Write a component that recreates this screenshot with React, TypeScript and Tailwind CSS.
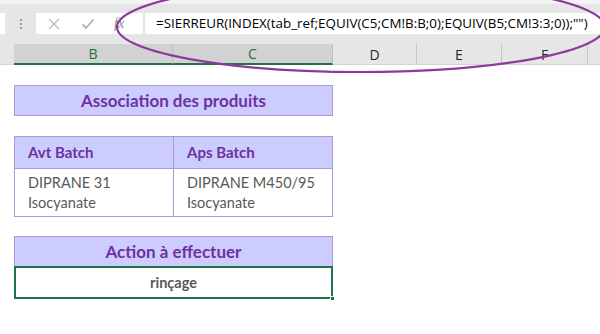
import React from 'react';

const font = { fontFamily: '"Open Sans", "Noto Sans", sans-serif' };

function FormulaBar() {
  return (
    <div className="h-[44px] bg-[#e6e6e6] border-t-[4px] border-[#f3f3f3] pt-[9px]">
      <div className="flex h-[21px] items-stretch">
        <div className="w-[5px] bg-white" />
        <div className="w-[31px] flex flex-col items-center justify-center gap-[2px]">
          <span className="w-[2px] h-[2px] bg-[#9a9a9a]" />
          <span className="w-[2px] h-[2px] bg-[#9a9a9a]" />
          <span className="w-[2px] h-[2px] bg-[#9a9a9a]" />
        </div>
        <div className="w-[107px] bg-white flex items-center text-[#b3b3b3]">
          <svg width="14" height="14" viewBox="0 0 14 14" className="ml-[11px]">
            <path d="M2 2 L12 12 M12 2 L2 12" stroke="#b8b8b8" strokeWidth="1.3" />
          </svg>
          <svg width="14" height="14" viewBox="0 0 14 14" className="ml-[20px]">
            <path d="M1.5 7.5 L5 11 L12.5 2.5" stroke="#b0b0b0" strokeWidth="1.8" fill="none" />
          </svg>
          <span className="ml-[19px] italic text-[14px] text-[#8a8a8a]" style={{ fontFamily: '"Liberation Serif", serif' }}>
            fx
          </span>
        </div>
        <div className="ml-[2px] flex-1 bg-white flex items-center pl-[11px] text-[13.4px] text-black whitespace-nowrap overflow-hidden" style={font}>
          =SIERREUR(INDEX(tab_ref;EQUIV(C5;CM!B:B;0);EQUIV(B5;CM!3:3;0));"")
        </div>
      </div>
    </div>
  );
}

function ColumnHeaders() {
  const cols = [
    { l: 'B', w: 'w-[159px]', sel: true },
    { l: 'C', w: 'w-[160px]', sel: true },
    { l: 'D', w: 'w-[84px]', sel: false },
    { l: 'E', w: 'w-[85px]', sel: false },
    { l: 'F', w: 'w-[86px]', sel: false },
  ];
  return (
    <div className="flex h-[21px] bg-[#e6e6e6] text-[14px]" style={font}>
      <div className="w-[14px] border-b border-[#d4d4d4]" />
      {cols.map(c => (
        <div
          key={c.l}
          className={
            c.sel
              ? `${c.w} flex items-center justify-center bg-[#d2d2d2] text-[#217346] border-r border-[#bdbdbd] border-b-2 border-b-[#217346]`
              : `${c.w} flex items-center justify-center text-[#262626] border-r border-[#c6c6c6] border-b border-b-[#d4d4d4]`
          }
        >
          {c.l}
        </div>
      ))}
      <div className="flex-1 border-b border-[#d4d4d4]" />
    </div>
  );
}

function Sheet() {
  return (
    <div className="pl-[14px] pt-[20px] w-[333px]" style={{ fontFamily: 'Lato, "Open Sans", sans-serif' }}>
      <div className="h-[31px] bg-[#ccccff] border border-[#a89bd8] flex items-center justify-center text-[17px] font-bold text-[#7030a0]">
        Association des produits
      </div>

      <div className="mt-[20px] border border-[#a89bd8]">
        <div className="flex h-[31px] bg-[#ccccff] text-[15px] font-bold text-[#7030a0]">
          <div className="w-[159px] border-r border-[#a89bd8] flex items-center pl-[13px]">Avt Batch</div>
          <div className="flex-1 flex items-center pl-[13px]">Aps Batch</div>
        </div>
        <div className="flex h-[48px] bg-white text-[14.5px] text-[#595959] leading-[20px] border-t border-[#a89bd8]">
          <div className="w-[159px] border-r border-[#a89bd8] flex flex-col justify-center pl-[13px]">
            <span>DIPRANE 31</span>
            <span>Isocyanate</span>
          </div>
          <div className="flex-1 flex flex-col justify-center pl-[13px]">
            <span>DIPRANE M450/95</span>
            <span>Isocyanate</span>
          </div>
        </div>
      </div>

      <div className="mt-[19px] h-[30px] bg-[#ccccff] border border-[#a89bd8] border-b-0 flex items-center justify-center text-[17px] font-bold text-[#7030a0]">
        Action à effectuer
      </div>
      <div className="relative h-[33px] border-2 border-[#217346] bg-white flex items-center justify-center text-[14.5px] font-bold text-[#595959]">
        rinçage
        <span className="absolute right-[-4px] bottom-[-4px] w-[5px] h-[5px] bg-[#217346] border border-white" />
      </div>
    </div>
  );
}

export default function App() {
  return (
    <div className="relative w-[600px] h-[334px] bg-white overflow-hidden">
      <FormulaBar />
      <ColumnHeaders />
      <Sheet />
      {/* hand-drawn highlight around the formula */}
      <svg className="absolute left-0 top-0 pointer-events-none" width="600" height="334">
        <ellipse cx="361" cy="27" rx="244" ry="45" fill="none" stroke="#8e3a9c" strokeWidth="2.2" />
      </svg>
    </div>
  );
}
